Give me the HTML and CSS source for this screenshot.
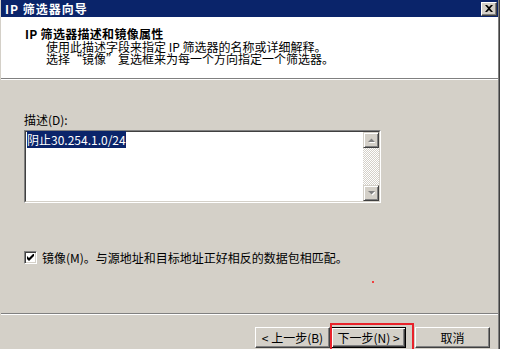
FILE: index.html
```html
<!DOCTYPE html>
<html lang="zh-CN">
<head>
    <meta charset="UTF-8">
    <title>IP 筛选器向导</title>
    <link rel="stylesheet" href="styles.css">
</head>
<body>
    <div class="dialog">
        <!-- 标题栏 -->
        <div class="titlebar">
            <span class="caption">IP 筛选器向导</span>
            <span class="close-btn">
                <svg width="8" height="7" viewBox="0 0 8 7">
                    <path d="M0 0h2l2 2 2-2h2L5 3.5 8 7H6L4 5 2 7H0l3-3.5z" fill="#000"/>
                </svg>
            </span>
        </div>

        <div class="header">
            <h1 class="heading">IP 筛选器描述和镜像属性</h1>
            <p class="sub">使用此描述字段来指定 IP 筛选器的名称或详细解释。<br>选择“镜像”复选框来为每一个方向指定一个筛选器。</p>
        </div>

        <div class="content">
            <div class="field-label">描述(D):</div>
            <div class="textbox">
                <div class="textbox-inner">
                    <div class="text"><span class="sel">阴止30.254.1.0/24</span></div>
                    <div class="scrollbar">
                        <div class="sb-btn">
                            <svg width="7" height="5" viewBox="0 0 7 5">
                                <path d="M1 5h7L4.5 1.5z" fill="#fff"/>
                                <path d="M0 4h7L3.5 0.5z" fill="#808080"/>
                            </svg>
                        </div>
                        <div class="sb-track"></div>
                        <div class="sb-btn">
                            <svg width="7" height="5" viewBox="0 0 7 5">
                                <path d="M1 1h7L4.5 4.5z" fill="#fff"/>
                                <path d="M0 0h7L3.5 3.5z" fill="#808080"/>
                            </svg>
                        </div>
                    </div>
                </div>
            </div>

            <div class="check-row">
                <span class="checkbox">
                    <svg width="7" height="7" viewBox="0 0 7 7">
                        <path d="M0 2v3l2 2 5-5V-1L2 4z" fill="#000"/>
                    </svg>
                </span>
                <span>镜像(M)。与源地址和目标地址正好相反的数据包相匹配。</span>
            </div>
        </div>

        <div class="footer">
            <button class="btn back">&lt; 上一步(B)</button>
            <button class="btn default">下一步(N) &gt;</button>
            <button class="btn">取消</button>
        </div>

        <!-- 截图上的红色标记 -->
        <span class="red-dot"></span>
        <span class="red-box"></span>
    </div>
</body>
</html>
```

FILE: styles.css
```css
:root {
    --face: #d4d0c8;
    --shadow: #808080;
    --dark: #404040;
    --navy: #0a246a;
}

body {
    margin: 0;
    background: #fff;
    font-family: "Noto Sans CJK SC", sans-serif;
    font-size: 12px;
    color: #000;
    height: 349px;
    overflow: hidden;
}

.dialog {
    position: relative;
    width: 500px;
    height: 349px;
    overflow: hidden;
    box-sizing: border-box;
    border-left: 1px solid var(--face);
    border-right: 1px solid var(--dark);
    padding-right: 1px;
    background: linear-gradient(to left, var(--shadow) 1px, var(--face) 1px);
}

.titlebar {
    height: 17px;
    background: var(--navy);
    color: #fff;
    font-weight: bold;
    letter-spacing: 1px;
    display: flex;
    align-items: center;
    justify-content: space-between;
    padding: 0 1px 0 4px;
    line-height: 17px;
}

.close-btn {
    width: 16px;
    height: 14px;
    box-sizing: border-box;
    background: var(--face);
    border: 1px solid;
    border-color: #fff var(--dark) var(--dark) #fff;
    box-shadow: inset -1px -1px 0 var(--shadow);
    display: flex;
    align-items: center;
    justify-content: center;
}

.header {
    height: 62px;
    box-sizing: border-box;
    background: #fff;
    padding: 10px 0 0 24px;
    border-bottom: 1px solid var(--shadow);
    box-shadow: 0 1px 0 #fff;
}

.heading {
    margin: 0;
    font-size: 12px;
    font-weight: bold;
    letter-spacing: 0.3px;
    line-height: 14px;
}

.sub {
    margin: 0 0 0 21px;
    line-height: 12px;
}

.content {
    height: 234px;
    box-sizing: border-box;
    padding: 34px 0 0 23px;
}

.field-label {
    line-height: 13px;
    margin-bottom: 4px;
}

.textbox {
    width: 357px;
    height: 73px;
    box-sizing: border-box;
    border: 1px solid;
    border-color: var(--shadow) #fff #fff var(--shadow);
}

.textbox-inner {
    height: 100%;
    box-sizing: border-box;
    border: 1px solid;
    border-color: var(--dark) var(--face) var(--face) var(--dark);
    background: #fff;
    display: flex;
}

.text {
    flex: 1;
    padding: 1px;
    line-height: 13px;
}

.sel {
    background: var(--navy);
    color: #fff;
}

.scrollbar {
    width: 16px;
    display: flex;
    flex-direction: column;
}

.sb-btn {
    height: 16px;
    box-sizing: border-box;
    background: var(--face);
    border: 1px solid;
    border-color: var(--face) var(--dark) var(--dark) var(--face);
    box-shadow: inset 1px 1px 0 #fff, inset -1px -1px 0 var(--shadow);
    display: flex;
    align-items: center;
    justify-content: center;
}

.sb-track {
    flex: 1;
    background-image: conic-gradient(#fff 25%, var(--face) 0 50%, #fff 0 75%, var(--face) 0);
    background-size: 2px 2px;
}

.check-row {
    margin-top: 48px;
    display: flex;
    align-items: center;
    gap: 5px;
    line-height: 13px;
}

.checkbox {
    width: 13px;
    height: 13px;
    box-sizing: border-box;
    background: #fff;
    border: 1px solid;
    border-color: var(--shadow) #fff #fff var(--shadow);
    box-shadow: inset 1px 1px 0 var(--dark), inset -1px -1px 0 var(--face);
    display: flex;
    align-items: center;
    justify-content: center;
}

.footer {
    border-top: 1px solid var(--shadow);
    box-shadow: inset 0 1px 0 #fff;
    padding: 13px 8px 0 0;
    display: flex;
    justify-content: flex-end;
}

.btn {
    width: 75px;
    height: 21px;
    padding: 0;
    font-family: inherit;
    font-size: 12px;
    color: #000;
    background: var(--face);
    border: 1px solid;
    border-color: #fff var(--dark) var(--dark) #fff;
    box-shadow: inset -1px -1px 0 var(--shadow);
}

.btn.back {
    margin-right: 1px;
}

.btn.default {
    margin-right: 9px;
    border-color: #000;
    box-shadow: inset 1px 1px 0 #fff, inset -1px -1px 0 var(--dark), inset -2px -2px 0 var(--shadow);
}

.red-dot {
    position: absolute;
    left: 371px;
    top: 281px;
    width: 2px;
    height: 2px;
    background: #f04040;
}

.red-box {
    position: absolute;
    left: 329px;
    top: 323px;
    width: 80px;
    height: 24px;
    border: 2px solid #e8222a;
    border-bottom: none;
}
```
